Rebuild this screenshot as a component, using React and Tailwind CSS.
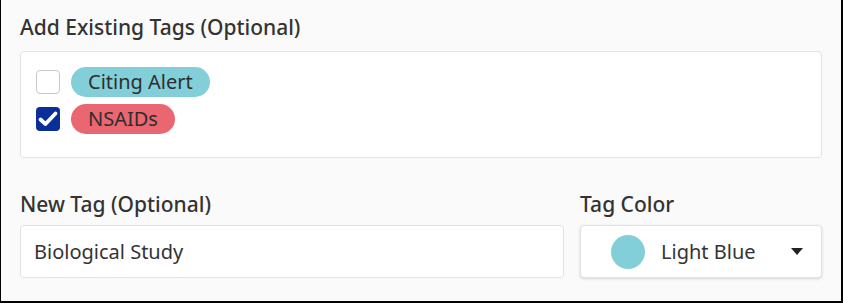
import React, { useState } from 'react'

const tags = [
    { name: "Citing Alert", color: "bg-[#82ced9]" },
    { name: "NSAIDs", color: "bg-[#ea6670]" },
]

const App = () => {
    const [checked, setChecked] = useState({ "Citing Alert": false, "NSAIDs": true })
    const [newTag, setNewTag] = useState("Biological Study")

    const toggle = (name) => {
        setChecked({ ...checked, [name]: !checked[name] })
    }

    return (
        <section className="w-[843px] h-[303px] bg-[#fafafa] border-l border-r-2 border-b-2 border-black px-[19px] pt-[14px] text-[#333] font-['Noto_Sans',sans-serif]">
            <h2 className="text-[21px] font-medium leading-[26px] mb-[11px]">Add Existing Tags (Optional)</h2>
            {/* Existing tags */}
            <div className="bg-white border border-[#e2e2e2] rounded h-[107px] pl-[15px] pt-[15px] flex flex-col gap-[7px]">
                {tags.map(tag => (
                    <label key={tag.name} className="flex items-center gap-[11px] cursor-pointer">
                        <span onClick={() => toggle(tag.name)} className={checked[tag.name] ? "w-[24px] h-[24px] rounded-[4px] bg-[#0a2f99] flex items-center justify-center" : "w-[24px] h-[24px] rounded-[4px] bg-white border border-[#c8c8c8]"}>
                            {checked[tag.name] && (
                                <svg width="24" height="24" viewBox="0 0 24 24">
                                    <path d="M4.5 12.5 L9.5 17 L19.5 6.5" fill="none" stroke="white" strokeWidth="3.8" strokeLinecap="round" strokeLinejoin="round" />
                                </svg>
                            )}
                        </span>
                        <span className={`${tag.color} rounded-full px-[17px] h-[30px] flex items-center text-[20px] text-[#2e2e2e]`}>{tag.name}</span>
                    </label>
                ))}
            </div>
            {/* New tag and colour */}
            <div className="flex gap-4 mt-[33px]">
                <div className="w-[544px]">
                    <label htmlFor="new_tag" className="block text-[21px] font-medium leading-[26px] mb-[8px]">New Tag (Optional)</label>
                    <input id="new_tag" type="text" value={newTag} onChange={e => setNewTag(e.target.value)} className="w-full h-[53px] bg-white border border-[#e2e2e2] rounded px-[13px] text-[20px] text-[#333] focus:outline-none" />
                </div>
                <div className="w-[242px]">
                    <label className="block text-[21px] font-medium leading-[26px] mb-[8px]">Tag Color</label>
                    <button type="button" className="w-full h-[53px] bg-white border border-[#e2e2e2] rounded shadow-[0_1px_3px_rgba(0,0,0,0.15)] flex items-center pl-[30px] pr-[18px]">
                        <span className="w-[34px] h-[34px] rounded-full bg-[#82ced9]"></span>
                        <span className="ml-[16px] text-[20px] text-[#333]">Light Blue</span>
                        <svg className="ml-auto" width="12" height="7" viewBox="0 0 12 7">
                            <path d="M0 0 L12 0 L6 7 Z" fill="#222" />
                        </svg>
                    </button>
                </div>
            </div>
        </section>
    )
}

export default App
